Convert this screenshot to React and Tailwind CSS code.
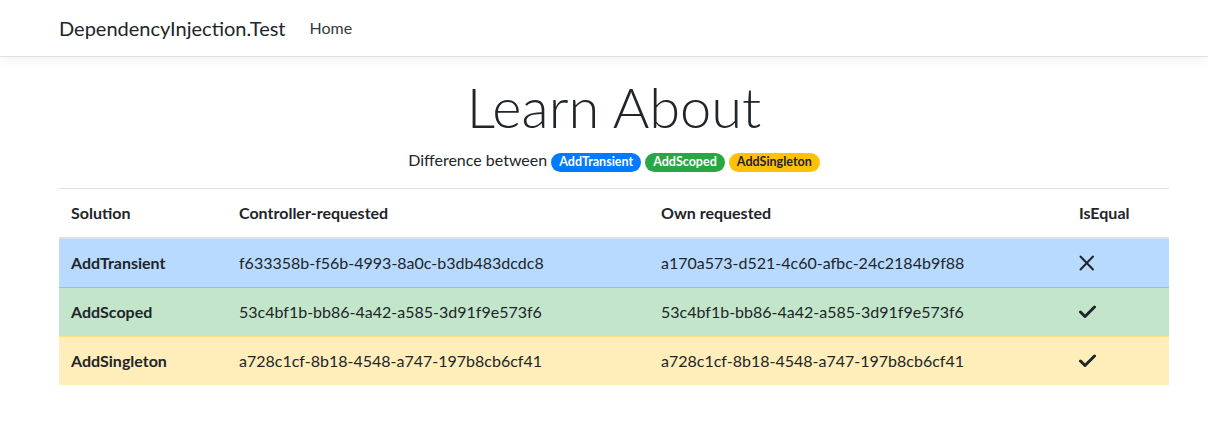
import React from 'react'

const rows = [
	{ name: 'AddTransient', controller: 'f633358b-f56b-4993-8a0c-b3db483dcdc8', own: 'a170a573-d521-4c60-afbc-24c2184b9f88', equal: false, bg: 'bg-[#b8daff]', border: 'border-t-[#7abaff]' },
	{ name: 'AddScoped', controller: '53c4bf1b-bb86-4a42-a585-3d91f9e573f6', own: '53c4bf1b-bb86-4a42-a585-3d91f9e573f6', equal: true, bg: 'bg-[#c3e6cb]', border: 'border-t-[#8fd19e]' },
	{ name: 'AddSingleton', controller: 'a728c1cf-8b18-4548-a747-197b8cb6cf41', own: 'a728c1cf-8b18-4548-a747-197b8cb6cf41', equal: true, bg: 'bg-[#ffeeba]', border: 'border-t-[#ffdf7e]' },
]

function Cross() {
	return (
		<svg width="16" height="16" viewBox="0 0 16 16" className="block">
			<path d="M1.5 1.5 L14 14.5 M14 1.5 L1.5 14.5" stroke="#212529" strokeWidth="2" strokeLinecap="round" fill="none" />
		</svg>
	)
}

function Check() {
	return (
		<svg width="17" height="16" viewBox="0 0 17 16" className="block">
			<path d="M1.5 8 L6 12.5 L15.5 3" stroke="#212529" strokeWidth="3" strokeLinecap="round" strokeLinejoin="round" fill="none" />
		</svg>
	)
}

export default function App() {
	return (
		<div className="min-h-[421px] bg-white text-[#212529] font-['Lato','Open_Sans',sans-serif] text-[16px] leading-6">
			{/* Navbar */}
			<nav className="border-b border-[#dee2e6] bg-white shadow-[0_4px_12px_rgba(0,0,0,0.05)] mb-4">
				<div className="w-[1140px] ml-[44px] px-[15px] h-14 flex items-center">
					<span className="text-[20px] leading-[30px] mr-4">DependencyInjection.Test</span>
					<span className="px-2 text-[#343a40]">Home</span>
				</div>
			</nav>

			<main className="w-[1140px] ml-[44px] px-[15px]">
				<div className="text-center">
					<h1 className="text-[56px] font-light leading-[1.2] mb-2">Learn About</h1>
					<p className="mb-4">
						Difference between{' '}
						<span className="inline-block align-baseline rounded-full bg-[#007bff] text-white text-[12.5px] font-bold leading-none px-[8px] py-[3px]">AddTransient</span>{' '}
						<span className="inline-block align-baseline rounded-full bg-[#28a745] text-white text-[12.5px] font-bold leading-none px-[8px] py-[3px]">AddScoped</span>{' '}
						<span className="inline-block align-baseline rounded-full bg-[#ffc107] text-[#212529] text-[12.5px] font-bold leading-none px-[8px] py-[3px]">AddSingleton</span>
					</p>
				</div>

				<table className="w-full border-collapse text-left">
					<thead>
						<tr>
							<th className="w-[168px] p-3 font-bold border-t border-[#dee2e6] border-b-2">Solution</th>
							<th className="w-[422px] p-3 font-bold border-t border-[#dee2e6] border-b-2">Controller-requested</th>
							<th className="w-[418px] p-3 font-bold border-t border-[#dee2e6] border-b-2">Own requested</th>
							<th className="p-3 font-bold border-t border-[#dee2e6] border-b-2">IsEqual</th>
						</tr>
					</thead>
					<tbody>
						{rows.map((r, i) => (
							<tr key={r.name} className={r.bg}>
								<td className={`p-3 font-bold ${i > 0 ? 'border-t ' + r.border : ''}`}>{r.name}</td>
								<td className={`p-3 ${i > 0 ? 'border-t ' + r.border : ''}`}>{r.controller}</td>
								<td className={`p-3 ${i > 0 ? 'border-t ' + r.border : ''}`}>{r.own}</td>
								<td className={`p-3 ${i > 0 ? 'border-t ' + r.border : ''}`}>
									<div>{r.equal ? <Check /> : <Cross />}</div>
								</td>
							</tr>
						))}
					</tbody>
				</table>
			</main>
		</div>
	)
}
